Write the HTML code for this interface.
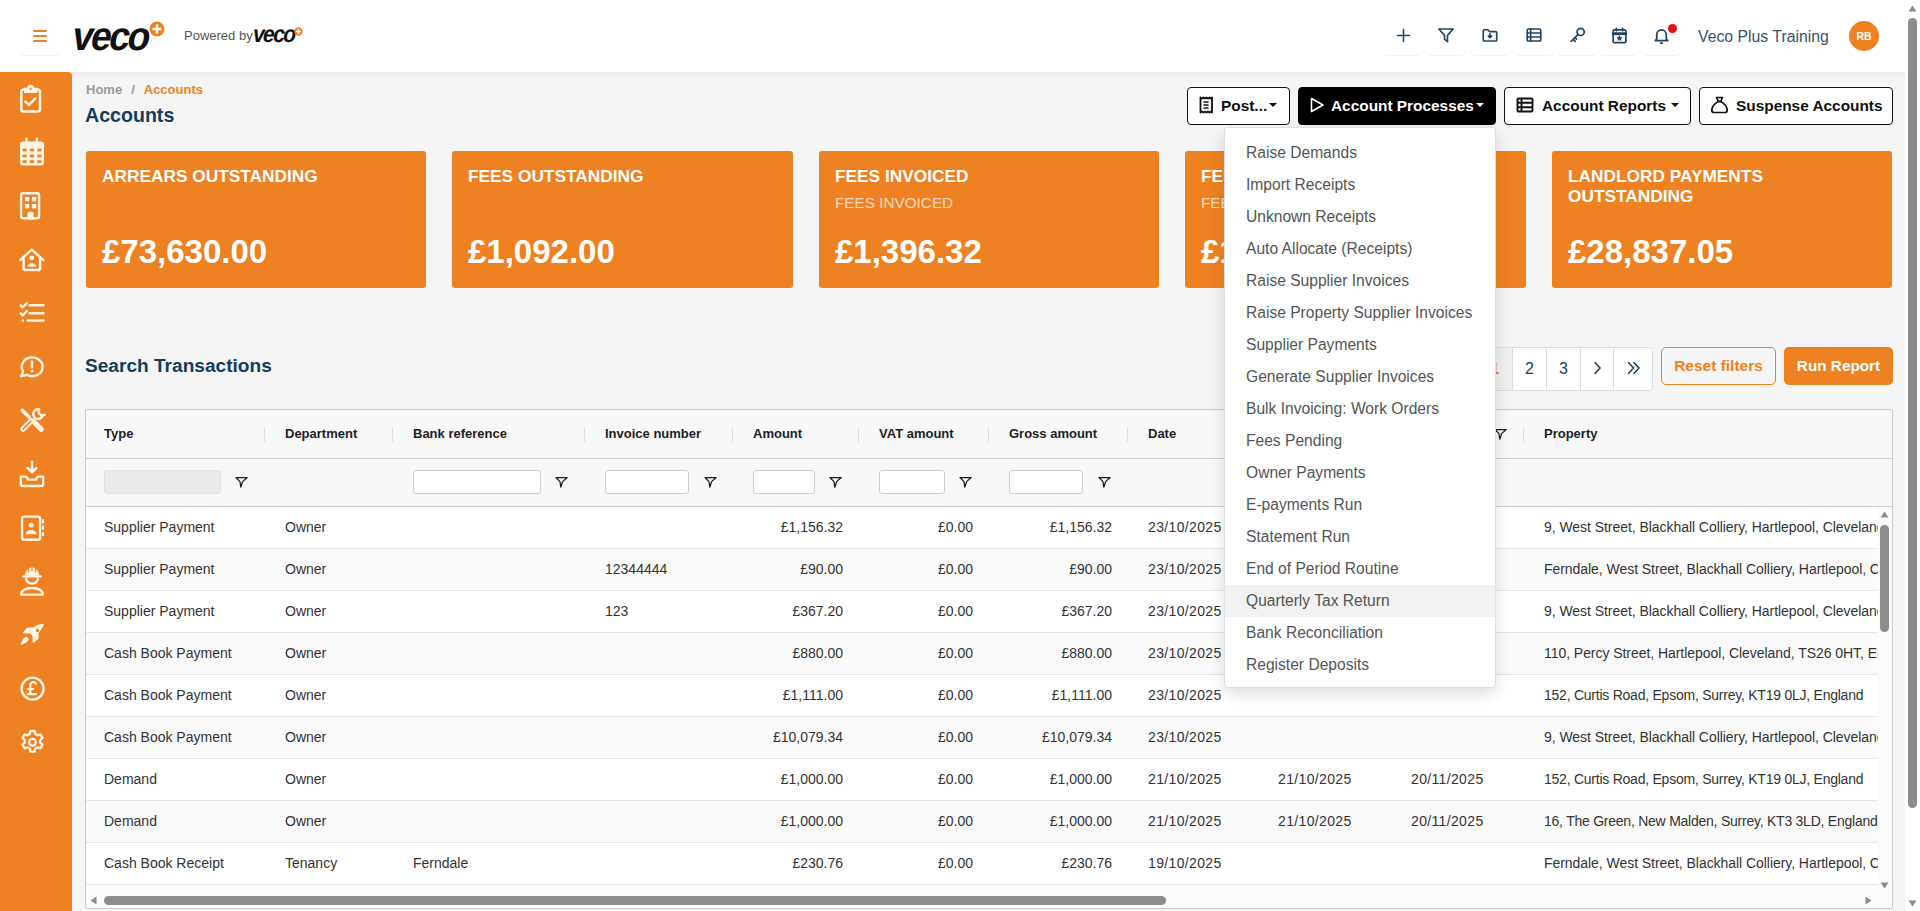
<!DOCTYPE html>
<html><head><meta charset="utf-8">
<style>
*{box-sizing:border-box;margin:0;padding:0}
html,body{width:1920px;height:911px;overflow:hidden;background:#f5f5f5;font-family:"Liberation Sans",sans-serif;}
.abs{position:absolute}
#hdr{position:absolute;left:0;top:0;width:1905px;height:72px;background:#fff;}
#side{position:absolute;left:0;top:72px;width:72px;height:839px;background:#ee8122;border-top-right-radius:4px}
#vscroll{position:absolute;left:1905px;top:0;width:15px;height:911px;background:#fff}
.card{position:absolute;top:151px;width:340px;height:137px;background:#ee8122;border-radius:3px;color:#fff}
.card .t{position:absolute;left:16px;top:14.5px;font-size:17.3px;font-weight:700;line-height:20px;white-space:nowrap}
.card .s{position:absolute;left:16px;top:43px;font-size:15.3px;line-height:18px;color:rgba(255,255,255,.7);white-space:nowrap}
.card .a{position:absolute;left:16px;top:80.5px;font-size:33px;font-weight:700;line-height:40px;white-space:nowrap}
.btn{position:absolute;top:87px;height:38px;border:1.5px solid #111;border-radius:4px;background:#fff;font-size:15.4px;font-weight:700;color:#111;white-space:nowrap}
.btn span{position:absolute;top:7.5px;line-height:20px}
.caret{position:absolute;top:14.5px;width:0;height:0;border-left:4px solid transparent;border-right:4px solid transparent;border-top:4.5px solid currentColor}
.th{font-size:13px;font-weight:700;color:#1e1e1e;line-height:16px;white-space:nowrap}
.td{font-size:14px;color:#333;line-height:18px;white-space:nowrap}
.dd{width:270px;height:32px;padding-left:21px;font-size:15.6px;color:#555;line-height:32px;white-space:nowrap}
</style></head><body>
<div id="hdr">
  <div class="abs" style="left:20px;top:15px;width:40px;height:40px;border-radius:6px;box-shadow:0 1.5px 1px -0.5px rgba(0,0,0,.06)"></div>
  <div class="abs" style="left:33px;top:30px;width:14px;height:2px;background:#ee8122;border-radius:1px"></div>
  <div class="abs" style="left:33px;top:35px;width:14px;height:2px;background:#ee8122;border-radius:1px"></div>
  <div class="abs" style="left:33px;top:40px;width:14px;height:2px;background:#ee8122;border-radius:1px"></div>
  <div class="abs" style="left:70px;top:13px;font-size:40.5px;font-weight:700;color:#111;letter-spacing:-2.6px;line-height:46px;transform:skewX(-11deg) scaleX(0.92);transform-origin:0 40px">veco</div>
  <svg class="abs" style="left:149px;top:21px" width="16" height="16" viewBox="0 0 16 16"><circle cx="8" cy="8" r="7.5" fill="#ee8122"/><path d="M8 3.5v9M3.5 8h9" stroke="#fff" stroke-width="2.4"/></svg>
  <div class="abs" style="left:184px;top:28px;font-size:13px;color:#555;line-height:16px">Powered by</div>
  <div class="abs" style="left:252px;top:21px;font-size:23.5px;font-weight:700;color:#111;letter-spacing:-1.9px;line-height:26px;transform:skewX(-11deg) scaleX(0.9);transform-origin:0 20px">veco</div>
  <svg class="abs" style="left:294px;top:27px" width="9" height="9" viewBox="0 0 16 16"><circle cx="8" cy="8" r="7.5" fill="#ee8122"/><path d="M8 3.5v9M3.5 8h9" stroke="#fff" stroke-width="2.6"/></svg>
  <div class="abs" style="left:1383px;top:15px;width:40px;height:40px;border-radius:6px;box-shadow:0 1.5px 1px -0.5px rgba(0,0,0,.06)"></div><svg class="abs" style="left:1394.5px;top:26.5px" width="17" height="17" viewBox="0 0 24 24" fill="none" stroke="#1f4563" stroke-width="2.2" stroke-linecap="round" stroke-linejoin="round"><path d="M12 3.5v17M3.5 12h17"/></svg>
  <div class="abs" style="left:1426px;top:15px;width:40px;height:40px;border-radius:6px;box-shadow:0 1.5px 1px -0.5px rgba(0,0,0,.06)"></div><svg class="abs" style="left:1437.0px;top:26.0px" width="18" height="18" viewBox="0 0 24 24" fill="none" stroke="#1f4563" stroke-width="2.2" stroke-linecap="round" stroke-linejoin="round"><path d="M2.5 4h19l-7.5 8.5v8.5l-4-3.5v-5z"/></svg>
  <div class="abs" style="left:1470px;top:15px;width:40px;height:40px;border-radius:6px;box-shadow:0 1.5px 1px -0.5px rgba(0,0,0,.06)"></div><svg class="abs" style="left:1481.0px;top:26.0px" width="18" height="18" viewBox="0 0 24 24" fill="none" stroke="#1f4563" stroke-width="2.2" stroke-linecap="round" stroke-linejoin="round"><path d="M3 6.5a1.5 1.5 0 0 1 1.5-1.5h4.5l2.5 2.5h8a1.5 1.5 0 0 1 1.5 1.5v9.5a1.5 1.5 0 0 1-1.5 1.5h-15a1.5 1.5 0 0 1-1.5-1.5z"/><path d="M12 10.5v5M9.8 13.3l2.2 2.2 2.2-2.2"/></svg>
  <div class="abs" style="left:1514px;top:15px;width:40px;height:40px;border-radius:6px;box-shadow:0 1.5px 1px -0.5px rgba(0,0,0,.06)"></div><svg class="abs" style="left:1525.0px;top:26.0px" width="18" height="18" viewBox="0 0 24 24" fill="none" stroke="#1f4563" stroke-width="2.2" stroke-linecap="round" stroke-linejoin="round"><rect x="3" y="4" width="18" height="16" rx="1.5"/><path d="M3 9.3h18M3 14.6h18M7.5 4v16"/></svg>
  <div class="abs" style="left:1557px;top:15px;width:40px;height:40px;border-radius:6px;box-shadow:0 1.5px 1px -0.5px rgba(0,0,0,.06)"></div><svg class="abs" style="left:1567.5px;top:25.5px" width="19" height="19" viewBox="0 0 24 24" fill="none" stroke="#1f4563" stroke-width="2.2" stroke-linecap="round" stroke-linejoin="round"><circle cx="16" cy="7.5" r="4.5"/><path d="M12.8 10.7L4 19.5M6.5 17l2.5 2.5M8.8 14.7l2 2"/></svg>
  <div class="abs" style="left:1599px;top:15px;width:40px;height:40px;border-radius:6px;box-shadow:0 1.5px 1px -0.5px rgba(0,0,0,.06)"></div><svg class="abs" style="left:1609.5px;top:25.5px" width="19" height="19" viewBox="0 0 24 24" fill="none" stroke="#1f4563" stroke-width="2.2" stroke-linecap="round" stroke-linejoin="round"><rect x="4" y="5" width="16" height="16" rx="1.5"/><path d="M4 9.5h16" stroke-width="3.5"/><path d="M8 3v3M16 3v3"/><path d="M12 12.2l1 2 2.2.3-1.6 1.5.4 2.2-2-1.1-2 1.1.4-2.2-1.6-1.5 2.2-.3z" fill="#1f4563" stroke-width="0.8"/></svg>
  <div class="abs" style="left:1641px;top:15px;width:40px;height:40px;border-radius:6px;box-shadow:0 1.5px 1px -0.5px rgba(0,0,0,.06)"></div><svg class="abs" style="left:1651.5px;top:25.5px" width="19" height="19" viewBox="0 0 24 24" fill="none" stroke="#1f4563" stroke-width="2.2" stroke-linecap="round" stroke-linejoin="round"><path d="M6 16.5V11a6 6 0 0 1 12 0v5.5l1.8 2H4.2z"/><path d="M11 21.5h2"/></svg>
  <div class="abs" style="left:1668px;top:24px;width:9px;height:9px;border-radius:50%;background:#e2121a"></div>
  <div class="abs" style="left:1698px;top:27.5px;font-size:15.8px;color:#34536b;line-height:18px;white-space:nowrap">Veco Plus Training</div>
  <div class="abs" style="left:1849px;top:21px;width:30px;height:30px;border-radius:50%;background:#ee8122;color:#fff;font-size:10.5px;font-weight:700;line-height:30px;text-align:center">RB</div>
</div>
<div id="hshadow" class="abs" style="left:0;top:72px;width:1905px;height:7px;background:linear-gradient(rgba(0,0,0,.035),rgba(0,0,0,0))"></div>
<div id="side"></div>
<svg class="abs" style="left:0;top:72px" width="72" height="839" viewBox="0 72 72 839" fill="none" stroke="#fff3e4" stroke-width="2.5" stroke-linecap="round" stroke-linejoin="round">
<!-- clipboard -->
<rect x="21.3" y="89.6" width="18.7" height="22" rx="2.6"/>
<path d="M24 87.8h3a3.7 3.7 0 0 1 7.3 0h3v5.2H24z" fill="#fff3e4" stroke="none"/>
<circle cx="30.6" cy="89.2" r="1.1" fill="#ee8122" stroke="none"/>
<path d="M25.4 101.6l3.6 3.4 6.3-6.6"/>
<!-- calendar -->
<rect x="20" y="141.5" width="24" height="24" rx="3" fill="#fff3e4" stroke="none"/>
<path d="M26.4 138.6v4M36.9 138.6v4" stroke-width="2.4"/>
<g fill="#ee8122" stroke="none">
<rect x="22.6" y="148.6" width="4" height="2.8"/><rect x="29.8" y="148.6" width="4.2" height="2.8"/><rect x="37.4" y="148.6" width="4" height="2.8"/>
<rect x="22.6" y="154.6" width="4" height="2.8"/><rect x="29.8" y="154.6" width="4.2" height="2.8"/><rect x="37.4" y="154.6" width="4" height="2.8"/>
<rect x="22.6" y="160.2" width="4" height="2.8"/><rect x="29.8" y="160.2" width="4.2" height="2.8"/><rect x="37.4" y="160.2" width="4" height="2.8"/>
</g>
<!-- building -->
<rect x="21.1" y="193.2" width="18" height="25" rx="2" stroke-width="2.4"/>
<g fill="#fff3e4" stroke="none"><rect x="24.8" y="196.9" width="4.4" height="4.4"/><rect x="31.9" y="196.9" width="4.4" height="4.4"/><rect x="24.8" y="204" width="4.4" height="4.4"/><rect x="31.9" y="204" width="4.4" height="4.4"/>
<path d="M27.3 219.4v-4.6a3.2 3.2 0 0 1 6.4 0v4.6z"/></g>
<!-- house -->
<path d="M20.2 260.2L31.8 249.6 43.4 260.2"/>
<path d="M23.6 257.2v11.3c0 .9.7 1.6 1.6 1.6h13.3c.9 0 1.6-.7 1.6-1.6v-11.3"/>
<circle cx="31.8" cy="257.8" r="2.4" fill="#fff3e4" stroke="none"/>
<path d="M27.2 266.8a4.6 3.6 0 0 1 9.2 0z" fill="#fff3e4" stroke="none"/>
<!-- list check -->
<path d="M20.6 305.3l2.1 2 4.2-4.3M20.6 313.3l2.1 2 4.2-4.3"/>
<circle cx="22.9" cy="320.6" r="1.3" fill="#fff3e4" stroke="none"/>
<path d="M29.6 305.3H43.5M29.6 313.2H43.5M27.6 320.6H43.5"/>
<!-- message alert -->
<path d="M21.2 376.4l1.9-5a10.4 9.4 0 1 1 3.6 3.4z" stroke-width="2.4"/>
<path d="M32 361.6v5.8" stroke-width="2.4"/>
<circle cx="32" cy="371.2" r="1.35" fill="#fff3e4" stroke="none"/>
<!-- tools -->
<path d="M22.3 410.3l6.6 6.6" stroke-width="3.6"/>
<path d="M33.2 421.2l8 8" stroke-width="5.2"/>
<path d="M30.5 418.5l2 2" stroke-width="2"/>
<path d="M23 429.2l8.2-8.2" stroke-width="5.4"/>
<path d="M23.3 428.9l7.6-7.6" stroke="#ee8122" stroke-width="1.5"/>
<path d="M42.8 414.8a4.8 4.8 0 1 1-3.9-5.4" stroke-width="2.5"/>
<path d="M39.3 409.3l-.6 3.6 2.6 2.6 3.6-.6" stroke-width="2.2"/>
<!-- download -->
<path d="M32 461.8v10.4M27.6 468l4.4 4.4 4.4-4.4"/>
<path d="M20.8 476.6v7.4c0 1.1.9 2 2 2h18.4c1.1 0 2-.9 2-2v-7.4h-5.6l-1.6 3h-8l-1.6-3z" stroke-width="2.4"/>
<!-- contact book -->
<rect x="22.1" y="516.6" width="18" height="23.2" rx="2" stroke-width="2.4"/>
<circle cx="31.2" cy="524.9" r="2.5" fill="#fff3e4" stroke="none"/>
<path d="M25.8 534.2a5.4 4.2 0 0 1 10.8 0z" fill="#fff3e4" stroke="none"/>
<path d="M43 520.2v2.2M43 526.6v2.2M43 533v2.2" stroke-width="2.2"/>
<!-- worker -->
<path d="M25 575.8a7 8.6 0 0 1 14 0z" fill="#fff3e4" stroke="none"/>
<path d="M23.6 576.4h16.8" stroke-width="2.4"/>
<path d="M32 566.4v4.5M28.4 568.5v3.6M35.6 568.5v3.6" stroke="#ee8122" stroke-width="1.1"/>
<path d="M26.3 578.8a5.7 5 0 0 0 11.4 0" stroke-width="2.4"/>
<path d="M21 594.6c0-4 4.5-6.6 11-6.6s11 2.6 11 6.6z" stroke-width="2.4"/>
<!-- rocket -->
<path d="M44 624c-6.5-.3-11.8 2.8-15 8.6l4.4 4.4c5.8-3.2 8.9-8.5 10.6-13z" fill="#fff3e4" stroke="none"/>
<path d="M28.8 632.6h-4.8l3.6-4.2h5.2M33.4 637v4.8l4.2-3.6v-5.2" fill="#fff3e4" stroke-width="1.8"/>
<circle cx="37.6" cy="630.4" r="1.6" fill="#ee8122" stroke="none"/>
<path d="M26.4 636.4c-2.6.7-4.6 3.5-6 8.6 5.1-1.4 7.9-3.4 8.6-6z" fill="#fff3e4" stroke="none"/>
<!-- pound -->
<circle cx="32.6" cy="688.6" r="11" stroke-width="2.4"/>
<path d="M35.9 683.6a3 3 0 0 0-5.6 1.5v8.6M27.6 694.2h8.6M27.8 689h5.6" stroke-width="2.2"/>
<!-- gear -->
<path d="M30.4 731h4.2l.6 2.9 2.4 1.4 2.8-1 2.1 3.6-2.2 2v2.8l2.2 2-2.1 3.6-2.8-1-2.4 1.4-.6 2.9h-4.2l-.6-2.9-2.4-1.4-2.8 1-2.1-3.6 2.2-2v-2.8l-2.2-2 2.1-3.6 2.8 1 2.4-1.4z" stroke-width="2.3"/>
<circle cx="32.5" cy="742.2" r="3.4" stroke-width="2.3"/>
</svg>
<div id="vscroll"><svg class="abs" style="left:3px;top:5px" width="9" height="7" viewBox="0 0 9 7"><path d="M4.5 0.5L8.5 6.5H0.5z" fill="#8c8c8c"/></svg><div class="abs" style="left:3px;top:18px;width:9px;height:790px;border-radius:5px;background:#8c8c8c"></div><svg class="abs" style="left:3px;top:900px" width="9" height="7" viewBox="0 0 9 7"><path d="M4.5 6.5L8.5 0.5H0.5z" fill="#8c8c8c"/></svg></div>

<!-- breadcrumb -->
<div class="abs" style="left:86px;top:82px;font-size:13px;font-weight:700;color:#9a9a9a;line-height:15px;white-space:nowrap">Home<span style="margin:0 9px 0 9px">/</span><span style="color:#ee8122">Accounts</span></div>
<div class="abs" style="left:85px;top:103.5px;font-size:19.6px;font-weight:700;color:#163c5a;line-height:22px">Accounts</div>

<!-- buttons -->
<div class="btn" style="left:1187px;width:103px"><span style="left:33px">Post...</span><div class="caret" style="left:81px"></div></div>
<div class="btn" style="left:1298px;width:198px;background:#000;border-color:#000;color:#fff"><span style="left:32px">Account Processes</span><div class="caret" style="left:177px"></div></div>
<div class="btn" style="left:1504px;width:187px"><span style="left:37px">Account Reports</span><div class="caret" style="left:166px"></div></div>
<div class="btn" style="left:1699px;width:194px"><span style="left:36px">Suspense Accounts</span></div>


<svg class="abs" style="left:1198px;top:96px" width="16" height="18" viewBox="0 0 16 18" fill="none" stroke="#111" stroke-width="1.8" stroke-linejoin="round"><path d="M2.5 1.5l1.5 1 1.5-1 1.5 1 1.5-1 1.5 1 1.5-1 1.5 1 1-1v15l-1 -1-1.5 1-1.5-1-1.5 1-1.5-1-1.5 1-1.5-1-1.5 1z"/><path d="M5.5 6h5M5.5 9h5M5.5 12h5" stroke-width="1.6"/></svg>
<svg class="abs" style="left:1309px;top:97px" width="16" height="16" viewBox="0 0 16 16" fill="none" stroke="#fff" stroke-width="1.6" stroke-linejoin="round"><path d="M2.5 1.5L14 8 2.5 14.5z"/></svg>
<svg class="abs" style="left:1516px;top:97px" width="18" height="16" viewBox="0 0 18 16" fill="none" stroke="#111" stroke-width="1.9"><rect x="1.5" y="1.5" width="15" height="13" rx="1"/><path d="M1.5 5.8h15M1.5 10.2h15M5.5 1.5v13"/></svg>
<svg class="abs" style="left:1710px;top:96px" width="19" height="18" viewBox="0 0 19 18" fill="none" stroke="#111" stroke-width="1.7" stroke-linejoin="round"><path d="M6.5 1.5h6l-1.8 4h-2.4z"/><path d="M8.3 5.5C4 7.5 1.5 11.5 1.8 14.5c.2 1.3 1 2 2.2 2h11c1.2 0 2-.7 2.2-2 .3-3-2.2-7-6.5-9z"/></svg>
<!-- cards -->
<div class="card" style="left:86px"><div class="t">ARREARS OUTSTANDING</div><div class="a">£73,630.00</div></div>
<div class="card" style="left:452px;width:341px"><div class="t">FEES OUTSTANDING</div><div class="a">£1,092.00</div></div>
<div class="card" style="left:819px"><div class="t">FEES INVOICED</div><div class="s">FEES INVOICED</div><div class="a">£1,396.32</div></div>
<div class="card" style="left:1185px;width:341px"><div class="t">FEES RECEIVED</div><div class="s">FEES RECEIVED</div><div class="a">£1,192.32</div></div>
<div class="card" style="left:1552px"><div class="t">LANDLORD PAYMENTS<br>OUTSTANDING</div><div class="a">£28,837.05</div></div>

<div class="abs" style="left:85px;top:355.2px;font-size:19.1px;font-weight:700;color:#163c5a;line-height:22px">Search Transactions</div>








<!--TABLE-->
<div class="abs" style="left:85px;top:409px;width:1808px;height:500px;border:1px solid #c9c9c9;border-radius:2px;background:#f8f8f8;overflow:hidden">
<div style="position:absolute;left:0;top:0;width:1806px;height:497px">
<div class="abs" style="left:0px;top:48px;width:1807px;height:1px;background:#cfcfcf"></div>
<div class="abs" style="left:0px;top:96px;width:1807px;height:1px;background:#cfcfcf"></div>
<div class="abs th" style="left:18px;top:16px">Type</div>
<div class="abs th" style="left:199px;top:16px">Department</div>
<div class="abs" style="left:178px;top:17px;width:1px;height:15px;background:#dedede"></div>
<div class="abs th" style="left:327px;top:16px">Bank reference</div>
<div class="abs" style="left:306px;top:17px;width:1px;height:15px;background:#dedede"></div>
<div class="abs th" style="left:519px;top:16px">Invoice number</div>
<div class="abs" style="left:498px;top:17px;width:1px;height:15px;background:#dedede"></div>
<div class="abs th" style="left:667px;top:16px">Amount</div>
<div class="abs" style="left:646px;top:17px;width:1px;height:15px;background:#dedede"></div>
<div class="abs th" style="left:793px;top:16px">VAT amount</div>
<div class="abs" style="left:772px;top:17px;width:1px;height:15px;background:#dedede"></div>
<div class="abs th" style="left:923px;top:16px">Gross amount</div>
<div class="abs" style="left:902px;top:17px;width:1px;height:15px;background:#dedede"></div>
<div class="abs th" style="left:1062px;top:16px">Date</div>
<div class="abs" style="left:1041px;top:17px;width:1px;height:15px;background:#dedede"></div>
<div class="abs th" style="left:1192px;top:16px">Due date</div>
<div class="abs" style="left:1171px;top:17px;width:1px;height:15px;background:#dedede"></div>
<div class="abs th" style="left:1325px;top:16px">Payment date</div>
<div class="abs" style="left:1304px;top:17px;width:1px;height:15px;background:#dedede"></div>
<div class="abs th" style="left:1458px;top:16px">Property</div>
<div class="abs" style="left:1437px;top:17px;width:1px;height:15px;background:#dedede"></div>
<svg class="abs" style="left:1408px;top:18px" width="14" height="13" viewBox="0 0 14 13" fill="none" stroke="#1a1a1a" stroke-width="1.25" stroke-linejoin="round"><path d="M1 1.5H12.2L7.6 5.6L5.8 11.2L5 5.6Z"/></svg>
<div class="abs" style="left:18px;top:60px;width:117px;height:24px;border:1px solid #cdcdcd;border-radius:3px;background:#ebebeb;border-color:#e2e2e2"></div>
<div class="abs" style="left:327px;top:60px;width:128px;height:24px;border:1px solid #cdcdcd;border-radius:3px;background:#fff"></div>
<div class="abs" style="left:519px;top:60px;width:84px;height:24px;border:1px solid #cdcdcd;border-radius:3px;background:#fff"></div>
<div class="abs" style="left:667px;top:60px;width:62px;height:24px;border:1px solid #cdcdcd;border-radius:3px;background:#fff"></div>
<div class="abs" style="left:793px;top:60px;width:66px;height:24px;border:1px solid #cdcdcd;border-radius:3px;background:#fff"></div>
<div class="abs" style="left:923px;top:60px;width:74px;height:24px;border:1px solid #cdcdcd;border-radius:3px;background:#fff"></div>
<svg class="abs" style="left:149px;top:66px" width="14" height="13" viewBox="0 0 14 13" fill="none" stroke="#1a1a1a" stroke-width="1.25" stroke-linejoin="round"><path d="M1 1.5H12.2L7.6 5.6L5.8 11.2L5 5.6Z"/></svg>
<svg class="abs" style="left:469px;top:66px" width="14" height="13" viewBox="0 0 14 13" fill="none" stroke="#1a1a1a" stroke-width="1.25" stroke-linejoin="round"><path d="M1 1.5H12.2L7.6 5.6L5.8 11.2L5 5.6Z"/></svg>
<svg class="abs" style="left:618px;top:66px" width="14" height="13" viewBox="0 0 14 13" fill="none" stroke="#1a1a1a" stroke-width="1.25" stroke-linejoin="round"><path d="M1 1.5H12.2L7.6 5.6L5.8 11.2L5 5.6Z"/></svg>
<svg class="abs" style="left:743px;top:66px" width="14" height="13" viewBox="0 0 14 13" fill="none" stroke="#1a1a1a" stroke-width="1.25" stroke-linejoin="round"><path d="M1 1.5H12.2L7.6 5.6L5.8 11.2L5 5.6Z"/></svg>
<svg class="abs" style="left:873px;top:66px" width="14" height="13" viewBox="0 0 14 13" fill="none" stroke="#1a1a1a" stroke-width="1.25" stroke-linejoin="round"><path d="M1 1.5H12.2L7.6 5.6L5.8 11.2L5 5.6Z"/></svg>
<svg class="abs" style="left:1012px;top:66px" width="14" height="13" viewBox="0 0 14 13" fill="none" stroke="#1a1a1a" stroke-width="1.25" stroke-linejoin="round"><path d="M1 1.5H12.2L7.6 5.6L5.8 11.2L5 5.6Z"/></svg>
<div class="abs" style="left:0px;top:97px;width:1792px;height:41px;background:#ffffff"></div>
<div class="abs" style="left:0px;top:138px;width:1792px;height:1px;background:#e6e6e6"></div>
<div class="abs td" style="left:18px;top:108px">Supplier Payment</div>
<div class="abs td" style="left:199px;top:108px">Owner</div>
<div class="abs td" style="left:649px;width:108px;text-align:right;top:108px">£1,156.32</div>
<div class="abs td" style="left:775px;width:112px;text-align:right;top:108px">£0.00</div>
<div class="abs td" style="left:905px;width:121px;text-align:right;top:108px">£1,156.32</div>
<div class="abs td" style="left:1062px;letter-spacing:0.35px;top:108px">23/10/2025</div>
<div class="abs td" style="left:1458px;width:334px;overflow:hidden;letter-spacing:-0.05px;top:108px">9, West Street, Blackhall Colliery, Hartlepool, Cleveland, TS27 4LQ, England</div>
<div class="abs" style="left:0px;top:139px;width:1792px;height:41px;background:#fafafa"></div>
<div class="abs" style="left:0px;top:180px;width:1792px;height:1px;background:#e6e6e6"></div>
<div class="abs td" style="left:18px;top:150px">Supplier Payment</div>
<div class="abs td" style="left:199px;top:150px">Owner</div>
<div class="abs td" style="left:519px;top:150px">12344444</div>
<div class="abs td" style="left:649px;width:108px;text-align:right;top:150px">£90.00</div>
<div class="abs td" style="left:775px;width:112px;text-align:right;top:150px">£0.00</div>
<div class="abs td" style="left:905px;width:121px;text-align:right;top:150px">£90.00</div>
<div class="abs td" style="left:1062px;letter-spacing:0.35px;top:150px">23/10/2025</div>
<div class="abs td" style="left:1458px;width:334px;overflow:hidden;letter-spacing:-0.05px;top:150px">Ferndale, West Street, Blackhall Colliery, Hartlepool, Cleveland</div>
<div class="abs" style="left:0px;top:181px;width:1792px;height:41px;background:#ffffff"></div>
<div class="abs" style="left:0px;top:222px;width:1792px;height:1px;background:#e6e6e6"></div>
<div class="abs td" style="left:18px;top:192px">Supplier Payment</div>
<div class="abs td" style="left:199px;top:192px">Owner</div>
<div class="abs td" style="left:519px;top:192px">123</div>
<div class="abs td" style="left:649px;width:108px;text-align:right;top:192px">£367.20</div>
<div class="abs td" style="left:775px;width:112px;text-align:right;top:192px">£0.00</div>
<div class="abs td" style="left:905px;width:121px;text-align:right;top:192px">£367.20</div>
<div class="abs td" style="left:1062px;letter-spacing:0.35px;top:192px">23/10/2025</div>
<div class="abs td" style="left:1458px;width:334px;overflow:hidden;letter-spacing:-0.05px;top:192px">9, West Street, Blackhall Colliery, Hartlepool, Cleveland, TS27 4LQ, England</div>
<div class="abs" style="left:0px;top:223px;width:1792px;height:41px;background:#fafafa"></div>
<div class="abs" style="left:0px;top:264px;width:1792px;height:1px;background:#e6e6e6"></div>
<div class="abs td" style="left:18px;top:234px">Cash Book Payment</div>
<div class="abs td" style="left:199px;top:234px">Owner</div>
<div class="abs td" style="left:649px;width:108px;text-align:right;top:234px">£880.00</div>
<div class="abs td" style="left:775px;width:112px;text-align:right;top:234px">£0.00</div>
<div class="abs td" style="left:905px;width:121px;text-align:right;top:234px">£880.00</div>
<div class="abs td" style="left:1062px;letter-spacing:0.35px;top:234px">23/10/2025</div>
<div class="abs td" style="left:1458px;width:334px;overflow:hidden;letter-spacing:-0.05px;top:234px">110, Percy Street, Hartlepool, Cleveland, TS26 0HT, England</div>
<div class="abs" style="left:0px;top:265px;width:1792px;height:41px;background:#ffffff"></div>
<div class="abs" style="left:0px;top:306px;width:1792px;height:1px;background:#e6e6e6"></div>
<div class="abs td" style="left:18px;top:276px">Cash Book Payment</div>
<div class="abs td" style="left:199px;top:276px">Owner</div>
<div class="abs td" style="left:649px;width:108px;text-align:right;top:276px">£1,111.00</div>
<div class="abs td" style="left:775px;width:112px;text-align:right;top:276px">£0.00</div>
<div class="abs td" style="left:905px;width:121px;text-align:right;top:276px">£1,111.00</div>
<div class="abs td" style="left:1062px;letter-spacing:0.35px;top:276px">23/10/2025</div>
<div class="abs td" style="left:1458px;width:334px;overflow:hidden;letter-spacing:-0.24px;top:276px">152, Curtis Road, Epsom, Surrey, KT19 0LJ, England</div>
<div class="abs" style="left:0px;top:307px;width:1792px;height:41px;background:#fafafa"></div>
<div class="abs" style="left:0px;top:348px;width:1792px;height:1px;background:#e6e6e6"></div>
<div class="abs td" style="left:18px;top:318px">Cash Book Payment</div>
<div class="abs td" style="left:199px;top:318px">Owner</div>
<div class="abs td" style="left:649px;width:108px;text-align:right;top:318px">£10,079.34</div>
<div class="abs td" style="left:775px;width:112px;text-align:right;top:318px">£0.00</div>
<div class="abs td" style="left:905px;width:121px;text-align:right;top:318px">£10,079.34</div>
<div class="abs td" style="left:1062px;letter-spacing:0.35px;top:318px">23/10/2025</div>
<div class="abs td" style="left:1458px;width:334px;overflow:hidden;letter-spacing:-0.05px;top:318px">9, West Street, Blackhall Colliery, Hartlepool, Cleveland, TS27 4LQ, England</div>
<div class="abs" style="left:0px;top:349px;width:1792px;height:41px;background:#ffffff"></div>
<div class="abs" style="left:0px;top:390px;width:1792px;height:1px;background:#e6e6e6"></div>
<div class="abs td" style="left:18px;top:360px">Demand</div>
<div class="abs td" style="left:199px;top:360px">Owner</div>
<div class="abs td" style="left:649px;width:108px;text-align:right;top:360px">£1,000.00</div>
<div class="abs td" style="left:775px;width:112px;text-align:right;top:360px">£0.00</div>
<div class="abs td" style="left:905px;width:121px;text-align:right;top:360px">£1,000.00</div>
<div class="abs td" style="left:1062px;letter-spacing:0.35px;top:360px">21/10/2025</div>
<div class="abs td" style="left:1192px;letter-spacing:0.35px;top:360px">21/10/2025</div>
<div class="abs td" style="left:1325px;letter-spacing:0.35px;top:360px">20/11/2025</div>
<div class="abs td" style="left:1458px;width:334px;overflow:hidden;letter-spacing:-0.24px;top:360px">152, Curtis Road, Epsom, Surrey, KT19 0LJ, England</div>
<div class="abs" style="left:0px;top:391px;width:1792px;height:41px;background:#fafafa"></div>
<div class="abs" style="left:0px;top:432px;width:1792px;height:1px;background:#e6e6e6"></div>
<div class="abs td" style="left:18px;top:402px">Demand</div>
<div class="abs td" style="left:199px;top:402px">Owner</div>
<div class="abs td" style="left:649px;width:108px;text-align:right;top:402px">£1,000.00</div>
<div class="abs td" style="left:775px;width:112px;text-align:right;top:402px">£0.00</div>
<div class="abs td" style="left:905px;width:121px;text-align:right;top:402px">£1,000.00</div>
<div class="abs td" style="left:1062px;letter-spacing:0.35px;top:402px">21/10/2025</div>
<div class="abs td" style="left:1192px;letter-spacing:0.35px;top:402px">21/10/2025</div>
<div class="abs td" style="left:1325px;letter-spacing:0.35px;top:402px">20/11/2025</div>
<div class="abs td" style="left:1458px;width:334px;overflow:hidden;letter-spacing:-0.24px;top:402px">16, The Green, New Malden, Surrey, KT3 3LD, England</div>
<div class="abs" style="left:0px;top:433px;width:1792px;height:41px;background:#ffffff"></div>
<div class="abs" style="left:0px;top:474px;width:1792px;height:1px;background:#e6e6e6"></div>
<div class="abs td" style="left:18px;top:444px">Cash Book Receipt</div>
<div class="abs td" style="left:199px;top:444px">Tenancy</div>
<div class="abs td" style="left:327px;top:444px">Ferndale</div>
<div class="abs td" style="left:649px;width:108px;text-align:right;top:444px">£230.76</div>
<div class="abs td" style="left:775px;width:112px;text-align:right;top:444px">£0.00</div>
<div class="abs td" style="left:905px;width:121px;text-align:right;top:444px">£230.76</div>
<div class="abs td" style="left:1062px;letter-spacing:0.35px;top:444px">19/10/2025</div>
<div class="abs td" style="left:1458px;width:334px;overflow:hidden;letter-spacing:-0.05px;top:444px">Ferndale, West Street, Blackhall Colliery, Hartlepool, Cleveland</div>
<div class="abs" style="left:0px;top:475px;width:1792px;height:23px;background:#fcfcfc"></div>
<div class="abs" style="left:1792px;top:475px;width:14px;height:23px;background:#fcfcfc"></div>
<div class="abs" style="left:1792px;top:97px;width:14px;height:377px;background:#fbfbfb"></div>
<div class="abs" style="left:1794px;top:115px;width:9px;height:107px;background:#8c8c8c;border-radius:5px"></div>
<svg class="abs" style="left:1794px;top:101px" width="9" height="7" viewBox="0 0 9 7"><path d="M4.5 0.5L8.5 6.5H0.5z" fill="#8c8c8c"/></svg>
<svg class="abs" style="left:1794px;top:472px" width="9" height="7" viewBox="0 0 9 7"><path d="M4.5 6.5L8.5 0.5H0.5z" fill="#8c8c8c"/></svg>
<div class="abs" style="left:18px;top:486px;width:1062px;height:9px;background:#8c8c8c;border-radius:5px"></div>
<svg class="abs" style="left:4px;top:486px" width="7" height="9" viewBox="0 0 7 9"><path d="M0.5 4.5L6.5 0.5V8.5z" fill="#8c8c8c"/></svg>
<svg class="abs" style="left:1779px;top:486px" width="7" height="9" viewBox="0 0 7 9"><path d="M6.5 4.5L0.5 0.5V8.5z" fill="#8c8c8c"/></svg>
</div></div>
<div class="abs" style="left:1478px;top:347px;width:175px;height:44px;background:#fff;border:1px solid #dcdcdc;border-radius:4px;overflow:hidden">
<div class="abs" style="left:-1px;top:0;width:34px;height:42px;background:#f0f0f0;color:#ee8122;font-size:16px;line-height:42px;text-align:center;font-weight:700;">1</div>
<div class="abs" style="left:33px;top:0;width:34px;height:42px;border-left:1px solid #dcdcdc;color:#1d3f5a;font-size:16px;line-height:42px;text-align:center;">2</div>
<div class="abs" style="left:67px;top:0;width:34px;height:42px;border-left:1px solid #dcdcdc;color:#1d3f5a;font-size:16px;line-height:42px;text-align:center;">3</div>
<div class="abs" style="left:101px;top:0;width:33px;height:42px;border-left:1px solid #dcdcdc;color:#1d3f5a;font-size:16px;line-height:42px;text-align:center;"><svg width="10" height="14" viewBox="0 0 10 14" style="vertical-align:-1px" fill="none" stroke="#1d3f5a" stroke-width="1.6" stroke-linecap="round" stroke-linejoin="round"><path d="M3 1.5L8 7 3 12.5"/></svg></div>
<div class="abs" style="left:134px;top:0;width:40px;height:42px;border-left:1px solid #dcdcdc;color:#1d3f5a;font-size:16px;line-height:42px;text-align:center;"><svg width="16" height="14" viewBox="0 0 16 14" style="vertical-align:-1px" fill="none" stroke="#1d3f5a" stroke-width="1.6" stroke-linecap="round" stroke-linejoin="round"><path d="M2.5 1.5L7.5 7 2.5 12.5M8 1.5L13 7 8 12.5"/></svg></div>
</div>
<div class="abs" style="left:1661px;top:347px;width:115px;height:38px;border:1px solid #ee8122;border-radius:5px;color:#ee8122;font-size:15.5px;font-weight:700;line-height:36px;text-align:center">Reset filters</div>
<div class="abs" style="left:1784px;top:347px;width:109px;height:38px;background:#ee8122;border-radius:5px;color:#fff;font-size:15.3px;font-weight:700;line-height:38px;text-align:center">Run Report</div>
<div class="abs" style="left:1224px;top:127px;width:272px;height:561px;background:#fff;border:1px solid rgba(0,0,0,.12);border-radius:4px;box-shadow:0 6px 16px rgba(0,0,0,.13)">
<div class="abs dd" style="left:0;top:8.5px;">Raise Demands</div>
<div class="abs dd" style="left:0;top:40.5px;">Import Receipts</div>
<div class="abs dd" style="left:0;top:72.5px;">Unknown Receipts</div>
<div class="abs dd" style="left:0;top:104.5px;">Auto Allocate (Receipts)</div>
<div class="abs dd" style="left:0;top:136.5px;">Raise Supplier Invoices</div>
<div class="abs dd" style="left:0;top:168.5px;">Raise Property Supplier Invoices</div>
<div class="abs dd" style="left:0;top:200.5px;">Supplier Payments</div>
<div class="abs dd" style="left:0;top:232.5px;">Generate Supplier Invoices</div>
<div class="abs dd" style="left:0;top:264.5px;">Bulk Invoicing: Work Orders</div>
<div class="abs dd" style="left:0;top:296.5px;">Fees Pending</div>
<div class="abs dd" style="left:0;top:328.5px;">Owner Payments</div>
<div class="abs dd" style="left:0;top:360.5px;">E-payments Run</div>
<div class="abs dd" style="left:0;top:392.5px;">Statement Run</div>
<div class="abs dd" style="left:0;top:424.5px;">End of Period Routine</div>
<div class="abs dd" style="left:0;top:456.5px;background:#f2f2f2;">Quarterly Tax Return</div>
<div class="abs dd" style="left:0;top:488.5px;">Bank Reconciliation</div>
<div class="abs dd" style="left:0;top:520.5px;">Register Deposits</div>
</div>
<!--/TABLE-->
</body></html>
